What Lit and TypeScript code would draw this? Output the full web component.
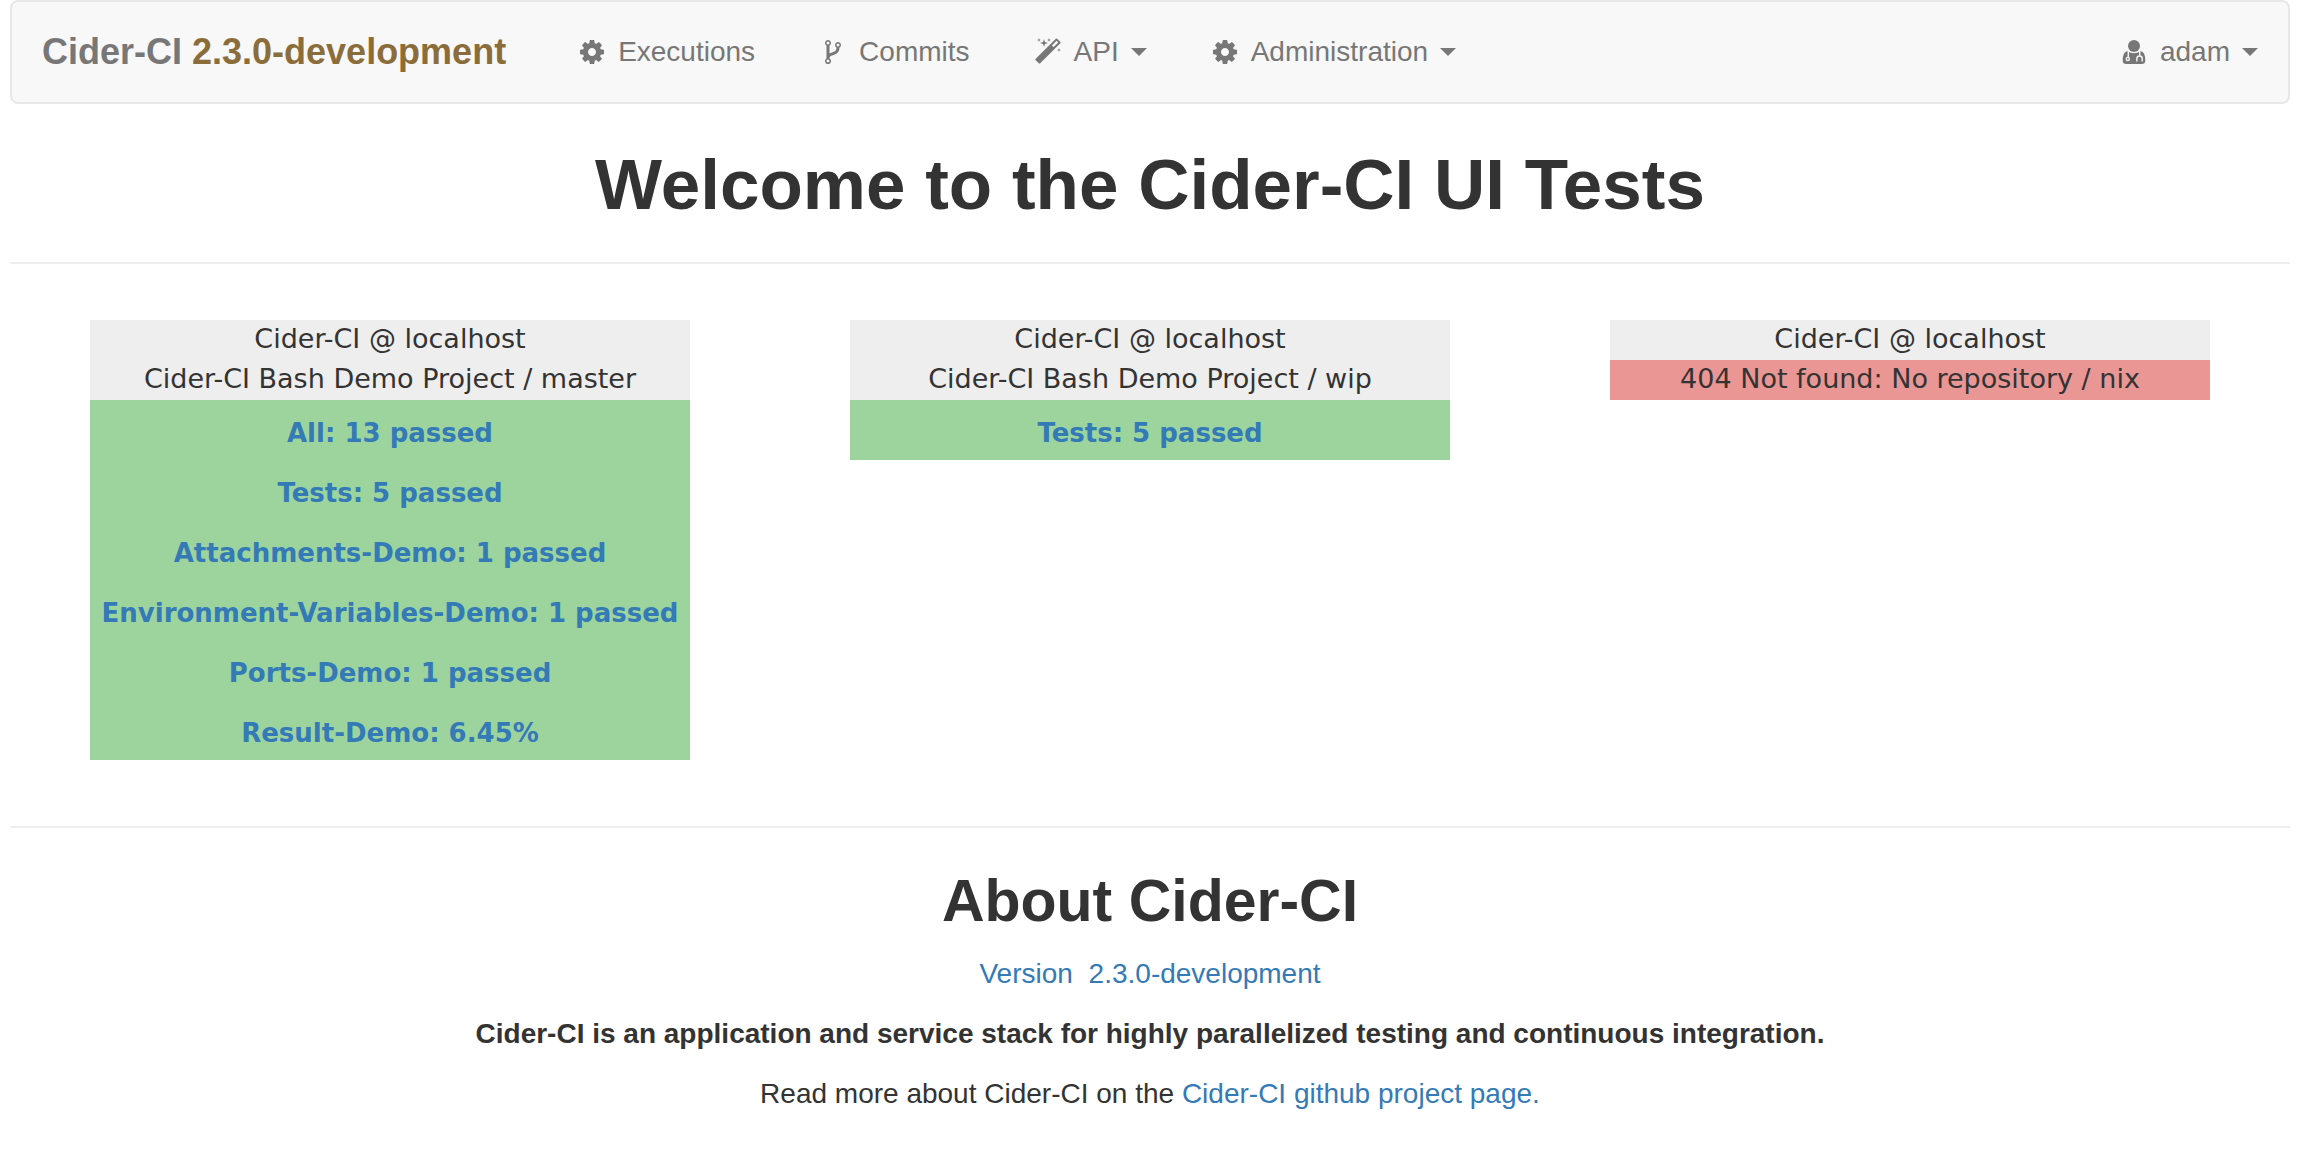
import { LitElement, html, css, svg } from "lit";
import { customElement } from "lit/decorators.js";

const COG =
  "M1152 896q0-106-75-181t-181-75-181 75-75 181 75 181 181 75 181-75 75-181zm512-109v222q0 12-8 23t-20 13l-185 28q-19 54-39 91 35 50 107 138 10 12 10 25t-9 23q-27 37-99 108t-94 71q-12 0-26-9l-138-108q-44 23-91 38-16 136-29 186-7 28-36 28h-222q-14 0-24.5-8.5t-11.5-21.5l-28-184q-49-16-90-37l-141 107q-10 9-25 9-14 0-25-11-126-114-165-168-7-10-7-23 0-12 8-23 15-21 51-66.5t54-70.5q-27-50-41-99l-183-27q-13-2-21-12.5t-8-23.5v-222q0-12 8-23t19-13l186-28q14-46 39-92-40-57-107-138-10-12-10-24 0-10 9-23 26-36 98.5-107.5t94.5-71.5q13 0 26 10l138 107q44-23 91-38 16-136 29-186 7-28 36-28h222q14 0 24.5 8.5t11.5 21.5l28 184q49 16 90 37l142-107q9-9 24-9 13 0 25 10 129 119 165 170 7 8 7 22 0 12-8 23-15 21-51 66.5t-54 70.5q26 50 41 98l183 28q13 2 21 12.5t8 23.5z";
const FORK =
  "M672 1472q0-40-28-68t-68-28-68 28-28 68 28 68 68 28 68-28 28-68zm0-1152q0-40-28-68t-68-28-68 28-28 68 28 68 68 28 68-28 28-68zm640 128q0-40-28-68t-68-28-68 28-28 68 28 68 68 28 68-28 28-68zm96 0q0 52-26 96.5t-70 69.5q-2 287-226 414-67 38-203 81-128 40-169.5 71t-41.5 100v26q44 25 70 69.5t26 96.5q0 80-56 136t-136 56-136-56-56-136q0-52 26-96.5t70-69.5v-820q-44-25-70-69.5t-26-96.5q0-80 56-136t136-56 136 56 56 136q0 52-26 96.5t-70 69.5v497q54-26 154-57 55-17 87.5-29.5t70.5-31 59-39.5 40.5-51 28-69.5 8.5-91.5q-44-25-70-69.5t-26-96.5q0-80 56-136t136-56 136 56 56 136z";
const MAGIC =
  "M1254 581l293-293-107-107-293 293zm447-293q0 27-18 45l-1286 1286q-18 18-45 18t-45-18l-198-198q-18-18-18-45t18-45l1286-1286q18-18 45-18t45 18l198 198q18 18 18 45zm-1351-190l98 30-98 30-30 98-30-98-98-30 98-30 30-98zm350 162l196 60-196 60-60 196-60-196-196-60 196-60 60-196zm930 478l98 30-98 30-30 98-30-98-98-30 98-30 30-98zm-640-640l98 30-98 30-30 98-30-98-98-30 98-30 30-98z";

const path = (d: string) => svg`<path fill="currentColor" d=${d}></path>`;

// A head over a coat with a stethoscope: chest piece on the left, ear tubes on the right.
const doctor = svg`
  <circle cx="896" cy="512" r="384" fill="currentColor"></circle>
  <path fill="currentColor" d="M480 830 Q660 980 896 980 T1312 830 Q1620 880 1620 1440 Q1620 1664 1390 1664 H402 Q172 1664 172 1440 Q172 880 480 830 Z"></path>
  <g fill="none" stroke="#f8f8f8" stroke-width="90">
    <path d="M530 830 V1210"></path>
    <circle cx="500" cy="1340" r="100"></circle>
    <path d="M1262 830 V1140 M1080 1510 V1310 Q1080 1150 1250 1150 T1420 1310 V1510"></path>
  </g>`;

interface NavEntry {
  label: string;
  icon: unknown;
  menu: boolean;
}

const NAV: NavEntry[] = [
  { label: "Executions", icon: path(COG), menu: false },
  { label: "Commits", icon: path(FORK), menu: false },
  { label: "API", icon: path(MAGIC), menu: true },
  { label: "Administration", icon: path(COG), menu: true },
];

interface Card {
  project: string;
  missing: boolean;
  results: string[];
}

const CARDS: Card[] = [
  {
    project: "Cider-CI Bash Demo Project / master",
    missing: false,
    results: [
      "All: 13 passed",
      "Tests: 5 passed",
      "Attachments-Demo: 1 passed",
      "Environment-Variables-Demo: 1 passed",
      "Ports-Demo: 1 passed",
      "Result-Demo: 6.45%",
    ],
  },
  {
    project: "Cider-CI Bash Demo Project / wip",
    missing: false,
    results: ["Tests: 5 passed"],
  },
  {
    project: "404 Not found: No repository / nix",
    missing: true,
    results: [],
  },
];

@customElement("app-root")
export class AppRoot extends LitElement {
  static styles = css`
    :host {
      display: block;
      padding: 0 18px 0 10px;
      background: #fff;
      color: #333;
      font: 28px/40px "Liberation Sans", Arial, sans-serif;
    }
    a {
      color: #337ab7;
      text-decoration: none;
    }
    .navbar {
      display: flex;
      align-items: center;
      padding: 30px;
      background: #f8f8f8;
      border: 2px solid #e7e7e7;
      border-radius: 8px;
      color: #777;
    }
    .brand {
      margin-right: 68px;
      color: #777;
      font-size: 36px;
      font-weight: bold;
    }
    .release {
      color: #8a6d3b;
    }
    .links {
      display: flex;
      flex: 1;
      gap: 60px;
      margin: 0;
      padding: 0;
      list-style: none;
    }
    .account {
      margin-left: auto;
    }
    .entry {
      display: flex;
      align-items: center;
      gap: 8px;
      margin: 0;
      padding: 0;
      border: 0;
      background: none;
      color: #777;
      font: inherit;
      cursor: pointer;
    }
    .glyph {
      display: flex;
      justify-content: center;
      width: 36px;
    }
    .icon {
      width: 28px;
      height: 28px;
    }
    .caret {
      margin-left: 4px;
      border: 8px solid transparent;
      border-top-color: currentColor;
      border-bottom: 0;
    }
    .title {
      margin: 0;
      padding: 42px 0 38px;
      font-size: 71px;
      line-height: 78px;
      font-weight: bold;
      text-align: center;
    }
    .rule {
      height: 2px;
      margin: 0;
      border: 0;
      background: #eee;
    }
    .cards {
      display: grid;
      grid-template-columns: repeat(3, 1fr);
      align-items: start;
      padding: 56px 0 66px;
      font-family: "DejaVu Sans", Verdana, sans-serif;
      font-size: 26px;
      text-align: center;
    }
    .card {
      margin: 0 80px;
      background: #eee;
      white-space: nowrap;
    }
    .line {
      margin: 0;
      padding-bottom: 2px;
      font-size: 27px;
      line-height: 38px;
      font-weight: normal;
    }
    .missing {
      background: #e99694;
    }
    .results {
      margin: 0;
      padding: 0;
      list-style: none;
      background: #9dd49d;
    }
    .result {
      padding: 13px 0 7px;
      font-weight: bold;
    }
    .about {
      padding-top: 40px;
      text-align: center;
    }
    .heading {
      margin: 0 0 20px;
      font-size: 59px;
      line-height: 66px;
      font-weight: bold;
    }
    .text {
      margin: 0 0 20px;
    }
    .number {
      margin-left: 8px;
    }
  `;

  private entry(item: NavEntry) {
    const body = html`<span class="glyph"
        ><svg class="icon" viewBox="0 0 1792 1792" aria-hidden="true">${item.icon}</svg></span
      ><span>${item.label}</span>`;
    return item.menu
      ? html`<button class="entry" type="button" aria-haspopup="true">${body}<span class="caret"></span></button>`
      : html`<a class="entry" href="#">${body}</a>`;
  }

  render() {
    return html`
      <nav class="navbar">
        <a class="brand" href="#">Cider-CI <span class="release">2.3.0-development</span></a>
        <ul class="links">
          ${NAV.map((item) => html`<li>${this.entry(item)}</li>`)}
          <li class="account">${this.entry({ label: "adam", icon: doctor, menu: true })}</li>
        </ul>
      </nav>
      <main>
        <h1 class="title">Welcome to the Cider-CI UI Tests</h1>
        <hr class="rule" />
        <section class="cards">
          ${CARDS.map(
            (card) => html`<article class="card">
              <h2 class="line">Cider-CI @ localhost</h2>
              <p class="line ${card.missing ? "missing" : ""}">${card.project}</p>
              <ul class="results">
                ${card.results.map((text) => html`<li class="result"><a href="#">${text}</a></li>`)}
              </ul>
            </article>`
          )}
        </section>
        <hr class="rule" />
        <section class="about">
          <h2 class="heading">About Cider-CI</h2>
          <p class="text"><a href="#">Version <span class="number">2.3.0-development</span></a></p>
          <p class="text">
            <strong
              >Cider-CI is an application and service stack for highly parallelized testing and continuous
              integration.</strong
            >
          </p>
          <p class="text">Read more about Cider-CI on the <a href="#">Cider-CI github project page.</a></p>
        </section>
      </main>
    `;
  }
}
